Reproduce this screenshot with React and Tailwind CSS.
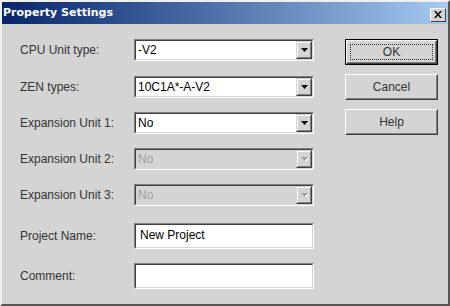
import React from "react";

const Arrow = ({ disabled }) => (
  <svg width="7" height="4" viewBox="0 0 7 4">
    {disabled && <path d="M1 1h7L4.5 5z" fill="#fff" />}
    <path d="M0 0h7L3.5 4z" fill={disabled ? "#a0a0a0" : "#000"} />
  </svg>
);

const Sunken = ({ children, disabled, className = "" }) => (
  <div className={`border border-t-[#808080] border-l-[#808080] border-b-white border-r-white ${className}`}>
    <div
      className={`h-full border border-t-[#404040] border-l-[#404040] border-b-[#d4d4d4] border-r-[#d4d4d4] ${
        disabled ? "bg-[#d4d4d4]" : "bg-white"
      }`}
    >
      {children}
    </div>
  </div>
);

const Combo = ({ value, disabled }) => (
  <Sunken disabled={disabled} className="h-[22px] w-[180px]">
    <div className="flex h-full">
      <div
        className={`flex-1 pl-[2px] text-[12px] leading-[18px] ${
          disabled ? "text-[#a0a0a0]" : "text-black"
        }`}
      >
        {value}
      </div>
      <div className="w-[16px] h-full border border-t-[#d4d4d4] border-l-[#d4d4d4] border-b-[#404040] border-r-[#404040]">
        <div className="h-full flex items-center justify-center bg-[#d4d4d4] border border-t-white border-l-white border-b-[#808080] border-r-[#808080]">
          <Arrow disabled={disabled} />
        </div>
      </div>
    </div>
  </Sunken>
);

const Field = ({ value }) => (
  <Sunken className="h-[26px] w-[180px]">
    <div className="pl-[4px] text-[12px] leading-[20px] text-black">{value}</div>
  </Sunken>
);

const Button = ({ label, isDefault }) => (
  <div className={`h-[26px] w-[93px] ${isDefault ? "border border-black" : ""}`}>
    <div className="h-full border border-t-white border-l-white border-b-[#404040] border-r-[#404040]">
      <div className="h-full border border-t-[#d4d4d4] border-l-[#d4d4d4] border-b-[#808080] border-r-[#808080] p-[2px]">
        <div
          className={`h-full flex items-center justify-center text-[12px] text-[#333] ${
            isDefault ? "border border-dotted border-[#333]" : ""
          }`}
        >
          {label}
        </div>
      </div>
    </div>
  </div>
);

const Row = ({ label, children, className = "" }) => (
  <div className={`flex items-center ${className}`}>
    <div className="w-[114px] text-[12px] text-[#333]">{label}</div>
    {children}
  </div>
);

export default function App() {
  return (
    <div
      className="w-[450px] h-[306px] bg-[#d4d4d4] border-2 border-t-[#f0f0f0] border-l-[#f0f0f0] border-b-[#555] border-r-[#555] flex flex-col"
      style={{ fontFamily: '"Liberation Sans", Arial, sans-serif' }}
    >
      {/* Title bar */}
      <div className="h-[22px] flex items-center justify-between bg-gradient-to-r from-[#0a246a] to-[#a6caf0] pl-[1px] pr-[2px]">
        <span
          className="text-white text-[11px] font-bold"
          style={{ fontFamily: '"DejaVu Sans", Verdana, sans-serif' }}
        >
          Property Settings
        </span>
        <div className="mt-[3px] w-[16px] h-[14px] bg-[#d4d4d4] border border-t-white border-l-white border-b-[#404040] border-r-[#404040] flex items-center justify-center">
          <svg width="8" height="7" viewBox="0 0 8 7">
            <path d="M0 0h2l2 2.5L6 0h2L5 3.5 8 7H6L4 4.5 2 7H0l3-3.5z" fill="#000" />
          </svg>
        </div>
      </div>

      <div className="flex pl-[18px] pt-[15px]">
        {/* Fields */}
        <div className="flex flex-col">
          <Row label="CPU Unit type:">
            <Combo value="-V2" />
          </Row>
          <Row label="ZEN types:" className="mt-[15px]">
            <Combo value="10C1A*-A-V2" />
          </Row>
          <Row label="Expansion Unit 1:" className="mt-[14px]">
            <Combo value="No" />
          </Row>
          <Row label="Expansion Unit 2:" className="mt-[14px]">
            <Combo value="No" disabled />
          </Row>
          <Row label="Expansion Unit 3:" className="mt-[14px]">
            <Combo value="No" disabled />
          </Row>
          <Row label="Project Name:" className="mt-[17px]">
            <Field value="New Project" />
          </Row>
          <Row label="Comment:" className="mt-[14px]">
            <Field value="" />
          </Row>
        </div>

        {/* Buttons */}
        <div className="flex flex-col gap-[9px] ml-[31px]">
          <Button label="OK" isDefault />
          <Button label="Cancel" />
          <Button label="Help" />
        </div>
      </div>
    </div>
  );
}
